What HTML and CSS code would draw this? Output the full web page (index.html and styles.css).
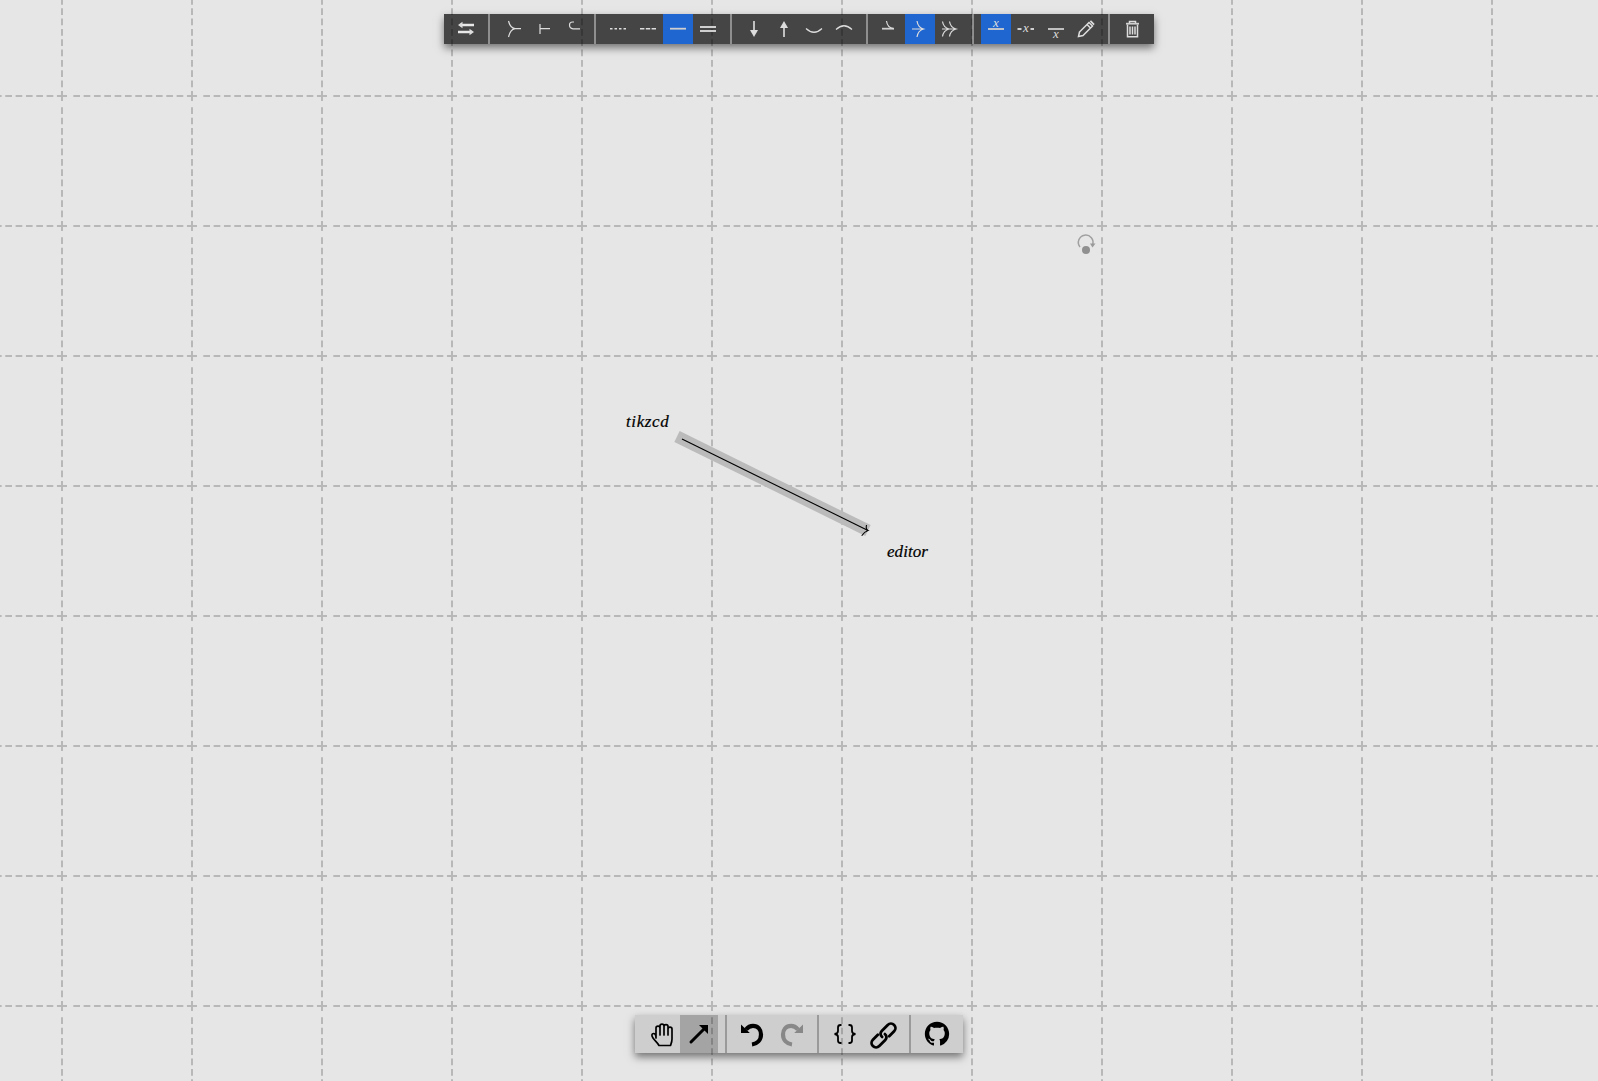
FILE: index.html
```html
<!DOCTYPE html>
<html lang="en">
<head>
<meta charset="utf-8">
<title>tikzcd editor</title>
<link rel="stylesheet" href="styles.css">
</head>
<body>
<main class="canvas">
  <svg class="grid" width="1598" height="1081" aria-hidden="true">
    <defs>
      <pattern id="cell" x="61" y="95" width="130" height="130" patternUnits="userSpaceOnUse">
        <g class="gridline">
          <path d="M1 1H131" />
          <path d="M-129 1H1" />
          <path d="M1 1V131" />
          <path d="M1 -129V1" />
        </g>
      </pattern>
    </defs>
    <rect width="1598" height="1081" fill="url(#cell)" />
    <g class="edge">
      <path class="edge-band" d="M677 436.5L868 530.500" />
      <path class="edge-line" d="M682 439L867.500 530.200" />
      <path class="edge-head" d="M866.5 525Q865.5 529.500 868 530.500Q864.500 531.500 861.700 535.700" />
    </g>
    <g class="loop">
      <path class="loop-arc" d="M1080 247A7.300 7.300 0 1 1 1092.500 245" />
      <path class="loop-tip" d="M1090 243.500L1095.500 243.500L1092.500 247.500Z" />
      <circle class="loop-dot" cx="1086" cy="250" r="4" />
    </g>
  </svg>

  <span class="node node-a">tikzcd</span>
  <span class="node node-b">editor</span>

  <div class="bars">
    <nav class="bar bar-dark">
      <button class="tool"><svg viewBox="0 0 30 30"><path class="bold" d="M9.500 11H23M20.500 18H7"/><path class="fill" d="M7 11L11.500 7.800V14.200ZM23 18L18.500 14.800V21.200Z"/></svg></button>
      <i class="sep"></i>
      <button class="tool"><svg viewBox="0 0 30 30"><path d="M24 14.700H18M11.500 7C12.500 11 15 14.200 18 14.700C15 15.200 12.500 19 11.500 23"/></svg></button>
      <button class="tool"><svg viewBox="0 0 30 30"><path d="M13 10V20M13 14.700H23"/></svg></button>
      <button class="tool"><svg viewBox="0 0 30 30"><path d="M17 8H15.500C13.500 8 12.500 9.300 12.500 11S13.500 14.500 16 14.800H23"/></svg></button>
      <i class="sep"></i>
      <button class="tool"><svg viewBox="0 0 30 30"><path class="dots" d="M7 14.700H23"/></svg></button>
      <button class="tool"><svg viewBox="0 0 30 30"><path class="dashes" d="M7 14.700H23"/></svg></button>
      <button class="tool is-on"><svg viewBox="0 0 30 30"><path class="thick" d="M7 14.700H23"/></svg></button>
      <button class="tool"><svg viewBox="0 0 30 30"><path class="thick" d="M7 13H23M7 17H23"/></svg></button>
      <i class="sep"></i>
      <button class="tool"><svg viewBox="0 0 30 30"><path class="thick" d="M15 7V18"/><path class="fill" d="M11 16H19L15 23Z"/></svg></button>
      <button class="tool"><svg viewBox="0 0 30 30"><path class="thick" d="M15 12V23"/><path class="fill" d="M11 14H19L15 7Z"/></svg></button>
      <button class="tool"><svg viewBox="0 0 30 30"><path d="M7 14.500Q15 22 23 14.500"/></svg></button>
      <button class="tool"><svg viewBox="0 0 30 30"><path d="M7 15.500Q15 8 23 15.500"/></svg></button>
      <i class="sep"></i>
      <button class="tool"><svg viewBox="0 0 30 30"><path class="thick" d="M7 14.700H19"/><path d="M11.500 7C12 11 14.500 14 18.500 14.700"/></svg></button>
      <button class="tool is-on"><svg viewBox="0 0 30 30"><path d="M7 15H18M12 7C12.500 10.500 15 14 18.500 15C15 16 12.500 19.500 12 23"/></svg></button>
      <button class="tool"><svg viewBox="0 0 30 30"><path d="M7 15H21M7.500 7.500C8 11 10.500 14 14 15C10.500 16 8 19 7.500 22.500M14.500 7.500C15 11 17.500 14 21 15C17.500 16 15 19 14.500 22.500"/></svg></button>
      <i class="sep"></i>
      <button class="tool is-on"><svg viewBox="0 0 30 30"><path class="thick" d="M7 15H23"/><text class="sym" x="15" y="12.500">x</text></svg></button>
      <button class="tool"><svg viewBox="0 0 30 30"><path class="thick" d="M6.500 15H10.500M19.500 15H23"/><text class="sym" x="15" y="18">x</text></svg></button>
      <button class="tool"><svg viewBox="0 0 30 30"><path class="thick" d="M7 15H23"/><text class="sym" x="15" y="23.500">x</text></svg></button>
      <button class="tool"><svg viewBox="0 0 30 30"><path class="mid" d="M8.500 18L18 8.500L21.500 12L12 21.500L7.500 22.500ZM16 10.500L19.500 14"/><path class="fill" d="M18.800 7.500L20 6.300L23.700 10L22.500 11.200Z"/></svg></button>
      <i class="sep"></i>
      <button class="tool"><svg viewBox="0 0 30 30"><path class="mid" d="M10.500 10.500V22.700H20.500V10.500M12.500 9.500V7.500H18.500V9.500M13 12.500V20.500M15.500 12.500V20.500M18 12.500V20.500"/><path class="thick" d="M9 9.700H22"/></svg></button>
    </nav>

    <nav class="bar bar-light">
      <button class="tool"><svg viewBox="0 0 38 38"><path class="ink" d="M14 23V13C14 10.500 18 10.500 18 13V11C18 8.500 22 8.500 22 11V11.500C22 9 26 9 26 11.500V14C26 11.500 30 11.500 30 14V24C30 27 29 29 28.500 30.500H17C15.500 27.500 13 26 11 23C9 20 10 18.500 11.500 18.500C13 18.500 14 20.500 14 23M18 13V20M22 11.500V20M26 14V20"/></svg></button>
      <button class="tool is-pressed"><svg viewBox="0 0 38 38"><path class="ink-thick" d="M11 27L24 14"/><path class="ink-fill" d="M19 10H28V19Z"/></svg></button>
      <i class="sep"></i>
      <button class="tool"><svg viewBox="0 0 38 38"><path class="ink-heavy" d="M12 14.500C14 12 16 10.800 19 10.800C24 10.800 27 14.500 27 19.500C27 25 23 28.800 18 29.500"/><path class="ink-fill" d="M7 9.500V18H15.800Z"/></svg></button>
      <button class="tool is-muted"><svg viewBox="0 0 38 38"><path class="ink-heavy" d="M26 14.500C24 12 22 10.800 19 10.800C14 10.800 11 14.500 11 19.500C11 25 15 28.800 20 29.500"/><path class="ink-fill" d="M31 9.500V18H22.200Z"/></svg></button>
      <i class="sep"></i>
      <button class="tool"><svg viewBox="0 0 38 38"><path class="ink-brace" d="M15.500 10H14.500C12.500 10 12 11 12 12.500V16C12 18 11 18.800 8.500 19C11 19.200 12 20 12 22V25.500C12 27 12.500 28 14.500 28H15.500M22.500 10H23.500C25.500 10 26 11 26 12.500V16C26 18 27 18.800 29.500 19C27 19.200 26 20 26 22V25.500C26 27 25.500 28 23.500 28H22.500"/></svg></button>
      <button class="tool"><svg viewBox="0 0 38 38"><g class="ink-link" transform="translate(19.500 20.500) rotate(-45)"><path d="M-3.500 -4.500H-10.500A4.500 4.500 0 0 0 -10.500 4.500H-2A4 4 0 0 0 2 0"/><path d="M3.500 4.500H10.500A4.500 4.500 0 0 0 10.500 -4.500H2A4 4 0 0 0 -2 0"/></g></svg></button>
      <i class="sep"></i>
      <button class="tool"><svg viewBox="-4.500 -4.500 25 25"><path class="ink-fill" d="M8 0C3.580 0 0 3.580 0 8c0 3.540 2.290 6.530 5.470 7.590.4.070.55-.17.55-.38 0-.19-.01-.82-.01-1.490-2.010.37-2.530-.49-2.690-.94-.09-.23-.48-.94-.82-1.130-.28-.15-.68-.52-.01-.53.63-.01 1.080.58 1.230.82.72 1.210 1.870.87 2.330.66.070-.52.28-.87.51-1.070-1.780-.2-3.640-.89-3.640-3.950 0-.87.31-1.590.82-2.150-.08-.2-.36-1.020.08-2.120 0 0 .67-.21 2.200.82.64-.18 1.320-.27 2-.27.68 0 1.360.09 2 .27 1.530-1.040 2.200-.82 2.200-.82.44 1.100.16 1.920.08 2.120.51.56.82 1.270.82 2.150 0 3.070-1.870 3.750-3.650 3.950.29.25.54.73.54 1.480 0 1.070-.01 1.930-.01 2.200 0 .21.15.46.55.38A8.013 8.013 0 0016 8c0-4.420-3.580-8-8-8z"/></svg></button>
    </nav>
  </div>
</main>
</body>
</html>
```
FILE: styles.css
```css
* { box-sizing: border-box; }
html, body { margin: 0; height: 100%; }
body { background: #e6e6e6; overflow: hidden; }

.canvas { position: relative; width: 1598px; height: 1081px; }
.grid { position: absolute; left: 0; top: 0; display: block; }
.gridline path {
  fill: none;
  stroke: #b8b8b8;
  stroke-width: 2;
  stroke-dasharray: 5 6.3 6.7 3.63 6.7 3.63 6.7 3.63 6.7 3.63 6.7 3.63 6.7 3.63 6.7 3.63 6.7 3.63 6.7 3.63 6.7 3.63 6.7 3.63 5 0;
}

.edge path { fill: none; }
.edge-band { stroke: #bbb; stroke-width: 12; }
.edge-line { stroke: #000; stroke-width: 1.1; }
.edge-head { stroke: #000; stroke-width: 1.1; }

.loop-arc { fill: none; stroke: #a0a0a0; stroke-width: 1.5; }
.loop-tip { fill: #999; }
.loop-dot { fill: #909090; }

.node {
  position: absolute;
  font: italic 17px/20px "Liberation Serif", serif;
  color: #000;
  white-space: nowrap;
  -webkit-text-stroke: 0.2px #000;
}
.node-a { left: 626px; top: 412px; letter-spacing: 0.6px; }
.node-b { left: 887px; top: 542px; letter-spacing: 0.05px; }

.bars {
  position: absolute;
  inset: 0;
  display: flex;
  flex-direction: column;
  justify-content: space-between;
  align-items: center;
  padding: 14px 0 28px;
}
.bar {
  display: flex;
  padding: 0 7px;
  box-shadow: 0 4px 8px rgba(0, 0, 0, 0.5);
}
.bar-dark { background: rgba(0, 0, 0, 0.7); height: 30px; }
.bar-light { background: rgba(0, 0, 0, 0.1); height: 38px; }

.tool {
  display: block;
  border: 0;
  padding: 0;
  margin: 0;
  background: none;
}
.tool svg { display: block; width: 100%; height: 100%; }
.bar-dark .tool { width: 30px; height: 30px; }
.bar-light .tool { width: 38px; height: 38px; }

.sep { display: block; width: 2px; margin: 0 7px; }
.bar-dark .sep { background: rgba(255, 255, 255, 0.4); }
.bar-light .sep { background: rgba(0, 0, 0, 0.25); }

.bar-dark .is-on { background: #1f66d1; }
.bar-light .is-pressed { background: rgba(0, 0, 0, 0.2); }

.bar-dark path { fill: none; stroke: #ddd; stroke-width: 1.2; }
.bar-dark path.thick { stroke: #cfcfcf; stroke-width: 1.8; }
.bar-dark path.mid { stroke-width: 1.5; }
.bar-dark path.bold { stroke: #e8e8e8; stroke-width: 2.4; }
.bar-dark path.fill { fill: #ddd; stroke: none; }
.bar-dark path.dots { stroke-width: 1.6; stroke-dasharray: 2.5 2; }
.bar-dark path.dashes { stroke-width: 1.6; stroke-dasharray: 4.4 1.4; }
.sym {
  font: italic 13px "Liberation Serif", serif;
  fill: #ddd;
  text-anchor: middle;
}

.bar-light path { fill: none; stroke: #000; }
.bar-light path.ink { stroke-width: 1.7; stroke-linejoin: round; stroke-linecap: round; }
.bar-light path.ink-thick { stroke-width: 3; stroke-linecap: round; }
.bar-light path.ink-heavy { stroke-width: 4.2; }
.bar-light path.ink-brace { stroke-width: 1.8; }
.bar-light path.ink-fill { fill: #000; stroke: none; }
.bar-light .ink-link path { stroke-width: 2.8; stroke-linecap: round; }
.is-muted path.ink-heavy { stroke: #888; }
.is-muted path.ink-fill { fill: #888; }
```
